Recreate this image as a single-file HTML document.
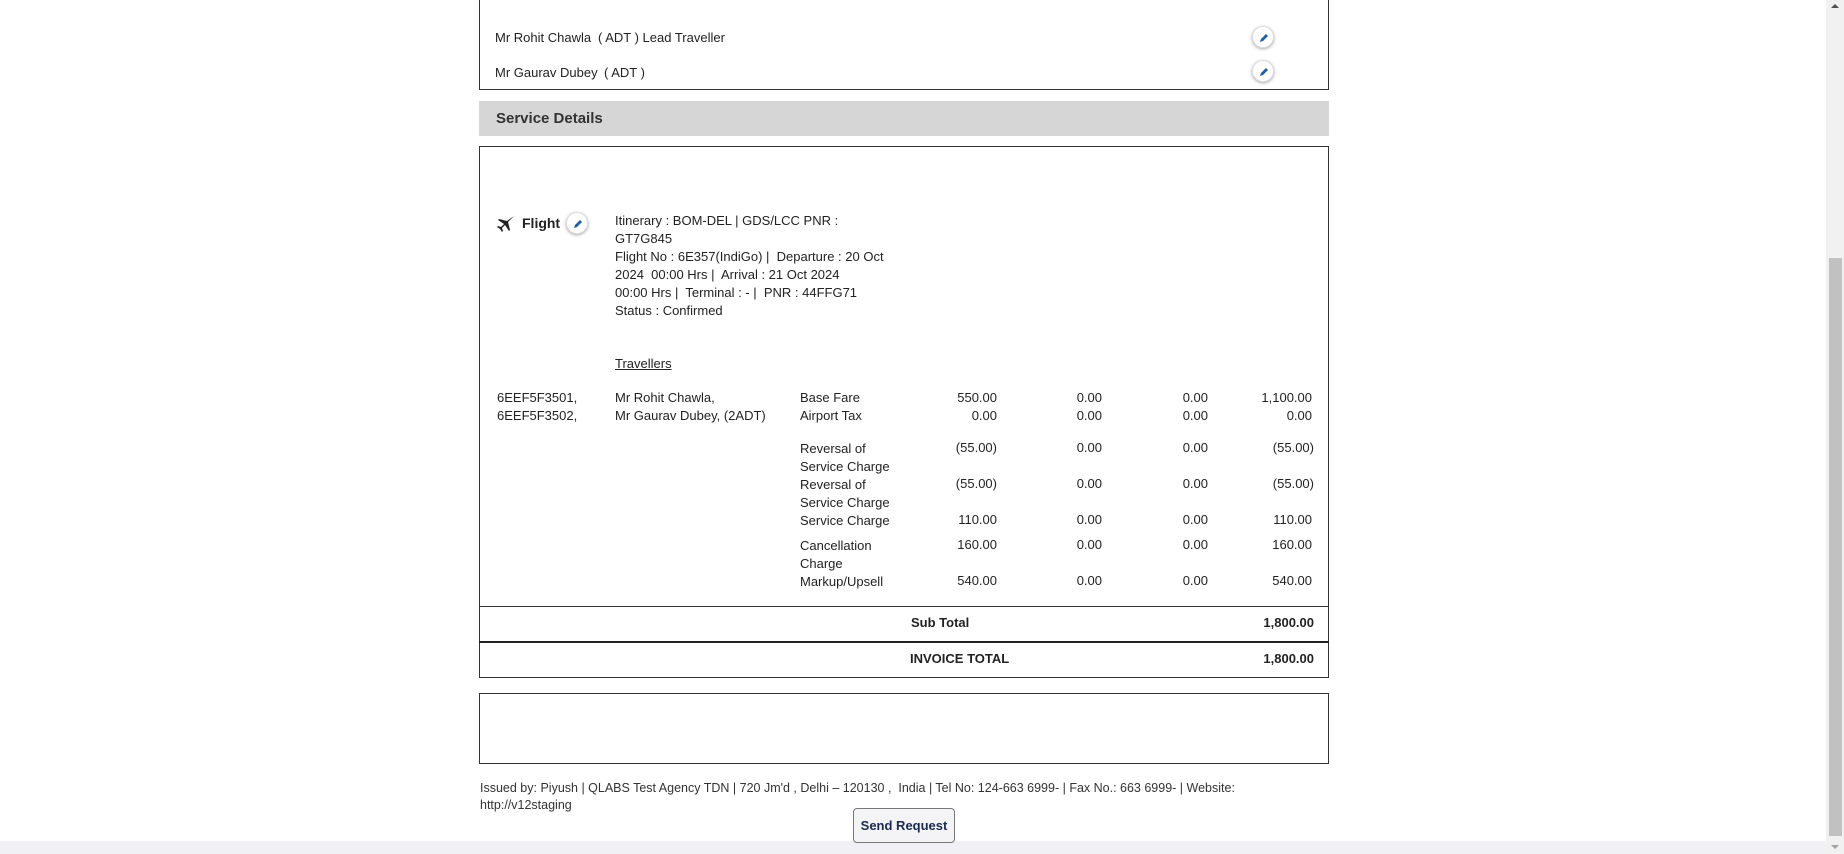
<!DOCTYPE html>
<html><head><meta charset="utf-8"><style>
*{box-sizing:border-box;margin:0;padding:0}
body{width:1844px;height:854px;overflow:hidden;background:#fff;font-family:"Liberation Sans",Arial,sans-serif;color:#222;font-size:13px;position:relative}
.a{position:absolute;white-space:nowrap}
.box{position:absolute;border:1px solid #333;left:479px;width:850px}
.r{text-align:right}
.ed{position:absolute;width:22px;height:22px;border-radius:50%;background:#fff;box-shadow:0 1px 3px rgba(0,0,0,.35);border:1px solid #ddd}
.ed svg{position:absolute;left:5px;top:5px}
</style></head><body>
<div class="box" style="top:-2px;height:92px"></div>
<div class="a" style="left:495px;top:30px">Mr Rohit Chawla</div>
<div class="a" style="left:598px;top:30px">( ADT ) Lead Traveller</div>
<div class="a" style="left:495px;top:65px">Mr Gaurav Dubey</div>
<div class="a" style="left:604px;top:65px">( ADT )</div>
<div class="ed" style="left:1252px;top:26px"><svg width="12" height="12" viewBox="0 0 12 12"><path d="M2 10 L3 7 L8 2 L10 4 L5 9 Z" fill="#1d5fa8"/></svg></div>
<div class="ed" style="left:1252px;top:60px"><svg width="12" height="12" viewBox="0 0 12 12"><path d="M2 10 L3 7 L8 2 L10 4 L5 9 Z" fill="#1d5fa8"/></svg></div>

<div class="a" style="left:479px;top:101px;width:850px;height:35px;background:#d6d6d6"></div>
<div class="a" style="left:496px;top:110px;font-size:15px;font-weight:bold;color:#333">Service Details</div>

<div class="box" style="top:146px;height:532px"></div>
<svg class="a" style="left:496px;top:214px" width="20" height="20" viewBox="0 0 20 20"><path d="M18 2 L11 7 L3 5 L2 6 L8 10 L5 13 L2 12 L1 13 L4 15 L6 18 L7 17 L6 14 L9 11 L13 17 L14 16 L12 8 L17 3 Z" fill="#222"/></svg>
<div class="a" style="left:522px;top:215px;font-weight:bold;font-size:14px">Flight</div>
<div class="ed" style="left:566px;top:212px"><svg width="12" height="12" viewBox="0 0 12 12"><path d="M2 10 L3 7 L8 2 L10 4 L5 9 Z" fill="#1d5fa8"/></svg></div>
<div class="a" style="left:615px;top:212px;line-height:18px">Itinerary : BOM-DEL | GDS/LCC PNR :<br>GT7G845<br>Flight No : 6E357(IndiGo) |&nbsp; Departure : 20 Oct<br>2024&nbsp; 00:00 Hrs |&nbsp; Arrival : 21 Oct 2024<br>00:00 Hrs |&nbsp; Terminal : - |&nbsp; PNR : 44FFG71<br>Status : Confirmed</div>
<div class="a" style="left:615px;top:356px;text-decoration:underline">Travellers</div>

<div class="a" style="left:497px;top:389px;line-height:18px">6EEF5F3501,<br>6EEF5F3502,</div>
<div class="a" style="left:615px;top:389px;line-height:18px">Mr Rohit Chawla,<br>Mr Gaurav Dubey, (2ADT)</div>
<div class="a" style="left:800px;top:389px;line-height:18px">Base Fare<br>Airport Tax</div>
<div class="a r" style="left:900px;width:97px;top:389px;line-height:18px">550.00<br>0.00</div>
<div class="a r" style="left:1000px;width:102px;top:389px;line-height:18px">0.00<br>0.00</div>
<div class="a r" style="left:1100px;width:108px;top:389px;line-height:18px">0.00<br>0.00</div>
<div class="a r" style="left:1200px;width:112px;top:389px;line-height:18px">1,100.00<br>0.00</div>

<div class="a" style="left:800px;top:440px;line-height:18px">Reversal of<br>Service Charge<br>Reversal of<br>Service Charge<br>Service Charge</div>
<div class="a r" style="left:900px;width:97px;top:440px">(55.00)</div>
<div class="a r" style="left:900px;width:97px;top:476px">(55.00)</div>
<div class="a r" style="left:900px;width:97px;top:512px">110.00</div>
<div class="a r" style="left:1000px;width:102px;top:440px">0.00</div>
<div class="a r" style="left:1000px;width:102px;top:476px">0.00</div>
<div class="a r" style="left:1000px;width:102px;top:512px">0.00</div>
<div class="a r" style="left:1100px;width:108px;top:440px">0.00</div>
<div class="a r" style="left:1100px;width:108px;top:476px">0.00</div>
<div class="a r" style="left:1100px;width:108px;top:512px">0.00</div>
<div class="a r" style="left:1200px;width:114px;top:440px">(55.00)</div>
<div class="a r" style="left:1200px;width:114px;top:476px">(55.00)</div>
<div class="a r" style="left:1200px;width:112px;top:512px">110.00</div>

<div class="a" style="left:800px;top:537px;line-height:18px">Cancellation<br>Charge<br>Markup/Upsell</div>
<div class="a r" style="left:900px;width:97px;top:537px">160.00</div>
<div class="a r" style="left:900px;width:97px;top:573px">540.00</div>
<div class="a r" style="left:1000px;width:102px;top:537px">0.00</div>
<div class="a r" style="left:1000px;width:102px;top:573px">0.00</div>
<div class="a r" style="left:1100px;width:108px;top:537px">0.00</div>
<div class="a r" style="left:1100px;width:108px;top:573px">0.00</div>
<div class="a r" style="left:1200px;width:112px;top:537px">160.00</div>
<div class="a r" style="left:1200px;width:112px;top:573px">540.00</div>

<div class="a" style="left:479px;top:606px;width:850px;height:1px;background:#333"></div>
<div class="a" style="left:911px;top:615px;font-weight:bold">Sub Total</div>
<div class="a r" style="left:1200px;width:114px;top:615px;font-weight:bold">1,800.00</div>
<div class="a" style="left:479px;top:641px;width:850px;height:2px;background:#222"></div>
<div class="a" style="left:910px;top:651px;font-weight:bold">INVOICE TOTAL</div>
<div class="a r" style="left:1200px;width:114px;top:651px;font-weight:bold">1,800.00</div>

<div class="box" style="top:693px;height:71px"></div>
<div class="a" style="left:480px;top:780px;font-size:12.5px;line-height:17px;color:#333">Issued by: Piyush | QLABS Test Agency TDN | 720 Jm'd , Delhi – 120130 ,&nbsp; India | Tel No: 124-663 6999- | Fax No.: 663 6999- | Website:<br>http://v12staging</div>
<div class="a" style="left:0;top:841px;width:1826px;height:13px;background:#f0f0f5"></div>
<div class="a" style="left:853px;top:808px;width:102px;height:35px;border:1px solid #777;border-radius:4px;background:#f4f4f6;font-weight:bold;color:#1a2a50;text-align:center;line-height:33px">Send Request</div>

<div class="a" style="left:1826px;top:0;width:18px;height:854px;background:#f1f1f1"></div>
<div class="a" style="left:1829px;top:258px;width:13px;height:578px;background:#c1c1c1"></div>
<div class="a" style="left:1831px;top:4px;width:0;height:0;border-left:4px solid transparent;border-right:4px solid transparent;border-bottom:4px solid #505050"></div>
<div class="a" style="left:1831px;top:845px;width:0;height:0;border-left:4px solid transparent;border-right:4px solid transparent;border-top:4px solid #a3a3a3"></div>
</body></html>
